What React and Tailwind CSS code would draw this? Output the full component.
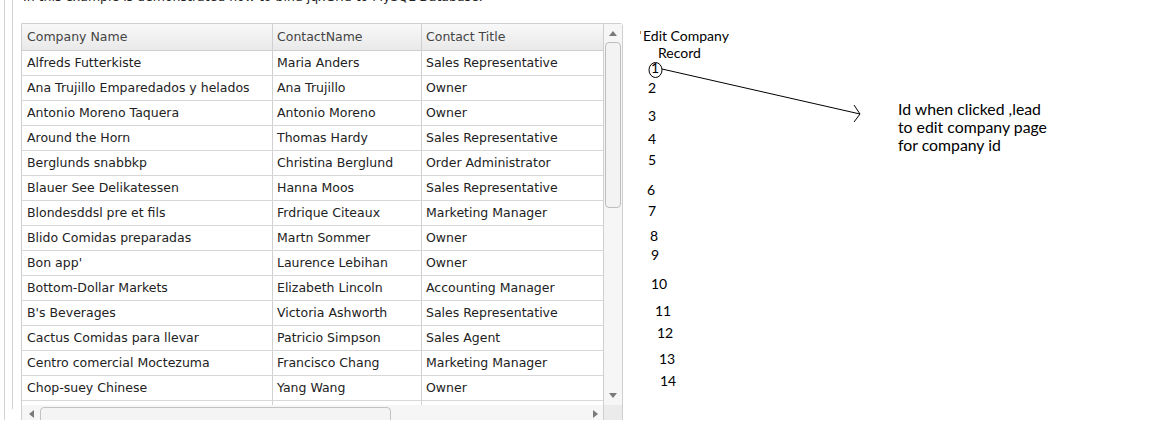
import React from "react";

const rows = [
  ["Alfreds Futterkiste", "Maria Anders", "Sales Representative"],
  ["Ana Trujillo Emparedados y helados", "Ana Trujillo", "Owner"],
  ["Antonio Moreno Taquera", "Antonio Moreno", "Owner"],
  ["Around the Horn", "Thomas Hardy", "Sales Representative"],
  ["Berglunds snabbkp", "Christina Berglund", "Order Administrator"],
  ["Blauer See Delikatessen", "Hanna Moos", "Sales Representative"],
  ["Blondesddsl pre et fils", "Frdrique Citeaux", "Marketing Manager"],
  ["Blido Comidas preparadas", "Martn Sommer", "Owner"],
  ["Bon app'", "Laurence Lebihan", "Owner"],
  ["Bottom-Dollar Markets", "Elizabeth Lincoln", "Accounting Manager"],
  ["B's Beverages", "Victoria Ashworth", "Sales Representative"],
  ["Cactus Comidas para llevar", "Patricio Simpson", "Sales Agent"],
  ["Centro comercial Moctezuma", "Francisco Chang", "Marketing Manager"],
  ["Chop-suey Chinese", "Yang Wang", "Owner"],
  ["", "", ""],
];

// [label, left x (relative to annotation area), top y]
const nums = [
  ["1", 28, 60],
  ["2", 25, 80],
  ["3", 25, 108],
  ["4", 25, 131],
  ["5", 25, 152],
  ["6", 24, 182],
  ["7", 25, 203],
  ["8", 27, 228],
  ["9", 28, 247],
  ["10", 28, 276],
  ["11", 32, 303],
  ["12", 34, 325],
  ["13", 36, 351],
  ["14", 37, 373],
];

function Tri({ dir }) {
  const pts = {
    up: "0,5 4,0 8,5",
    down: "0,0 8,0 4,5",
    left: "5,0 5,8 0,4",
    right: "0,0 0,8 5,4",
  }[dir];
  const w = dir === "up" || dir === "down" ? 8 : 5;
  const h = dir === "up" || dir === "down" ? 5 : 8;
  return (
    <svg width={w} height={h} viewBox={`0 0 ${w} ${h}`}>
      <polygon points={pts} fill="#7a7a7a" />
    </svg>
  );
}

export default function App() {
  const font = { fontFamily: '"DejaVu Sans", Verdana, sans-serif' };
  return (
    <div className="w-[1159px] h-[436px] bg-white overflow-hidden flex">
      {/* left section */}
      <div className="h-[420px] overflow-hidden flex shrink-0">
        <div className="w-[4px]" />
        <div className="border-l border-[#d2d2d2] pl-[7px] h-full">
          <div className="border-l border-[#d2d2d2] pl-[8px] h-full">
            <div
              className="text-[12.5px] leading-[16px] text-[#222] mt-[-11px] h-[16px] pl-[2px] whitespace-nowrap"
              style={font}
            >
              In this example is demonstrated how to bind jqxGrid to MySQL Database.
            </div>
            <div className="mt-[18px] w-[602px] border border-[#cfcfcf] rounded-tr-[3px] flex" style={font}>
              <div className="w-[581px] flex flex-col">
                <div className="h-[381px] overflow-hidden">
                  <div className="flex h-[27px] border-b border-[#d0d0d0] bg-gradient-to-b from-[#f8f8f8] to-[#e9e9e9] text-[12.5px] text-[#444]">
                    <div className="w-[251px] border-r border-[#d0d0d0] pl-[5px] pt-[1px] flex items-center">Company Name</div>
                    <div className="w-[149px] border-r border-[#d0d0d0] pl-[4px] pt-[1px] flex items-center">ContactName</div>
                    <div className="flex-1 pl-[4px] pt-[1px] flex items-center">Contact Title</div>
                  </div>
                  {rows.map((r, i) => (
                    <div key={i} className="flex h-[25px] border-b border-[#d8d8d8] text-[12.5px] text-[#222]">
                      <div className="w-[251px] border-r border-[#d0d0d0] pl-[5px] flex items-center whitespace-nowrap">{r[0]}</div>
                      <div className="w-[149px] border-r border-[#d0d0d0] pl-[4px] flex items-center whitespace-nowrap">{r[1]}</div>
                      <div className="flex-1 pl-[4px] flex items-center whitespace-nowrap">{r[2]}</div>
                    </div>
                  ))}
                </div>
                <div className="h-[16px] bg-[#f6f6f6] flex items-center">
                  <div className="w-[18px] flex justify-center pt-[1px]"><Tri dir="left" /></div>
                  <div className="w-[351px] h-[16px] mt-[2px] self-start border border-[#c2c2c2] rounded-t-[4px] bg-[#f4f4f4]" />
                  <div className="flex-1" />
                  <div className="w-[16px] flex justify-center pt-[1px]"><Tri dir="right" /></div>
                </div>
              </div>
              <div className="w-[19px] border-l border-[#cfcfcf] flex flex-col">
                <div className="h-[381px] bg-[#f6f6f6] flex flex-col items-center">
                  <div className="h-[18px] flex items-center justify-center pt-[1px]"><Tri dir="up" /></div>
                  <div className="w-[16px] h-[166px] border border-[#bdbdbd] rounded-[4px] bg-[#f3f3f3]" />
                  <div className="flex-1" />
                  <div className="h-[18px] flex items-center justify-center pb-[2px]"><Tri dir="down" /></div>
                </div>
                <div className="h-[16px] bg-[#ebebeb]" />
              </div>
            </div>
          </div>
        </div>
      </div>

      {/* annotation canvas */}
      <div className="relative flex-1 h-full text-[14px] text-black" style={{ fontFamily: 'Lato, "Open Sans", sans-serif' }}>
        <div className="absolute left-[17px] top-[31px] w-px h-[3px] bg-[#c08040]" />
        <div className="absolute left-[20px] top-[27px] leading-[18px]">Edit Company</div>
        <div className="absolute left-[35px] top-[44px] leading-[18px]">Record</div>
        {nums.map(([n, x, y]) => (
          <div key={n} className="absolute leading-[16px]" style={{ left: x, top: y }}>
            {n}
          </div>
        ))}
        <svg className="absolute left-0 top-0" width="536" height="436" viewBox="0 0 536 436">
          <ellipse cx="32.5" cy="70" rx="6.5" ry="7.5" fill="none" stroke="#000" strokeWidth="1" />
          <line x1="39" y1="69" x2="237" y2="114" stroke="#000" strokeWidth="1" />
          <polyline points="231,105 237,114 231,122" fill="none" stroke="#000" strokeWidth="1" />
        </svg>
        <div className="absolute left-[275px] top-[100px] leading-[18px] text-[15.8px]">
          <div>Id when clicked ,lead</div>
          <div>to edit company page</div>
          <div>for company id</div>
        </div>
      </div>
    </div>
  );
}
